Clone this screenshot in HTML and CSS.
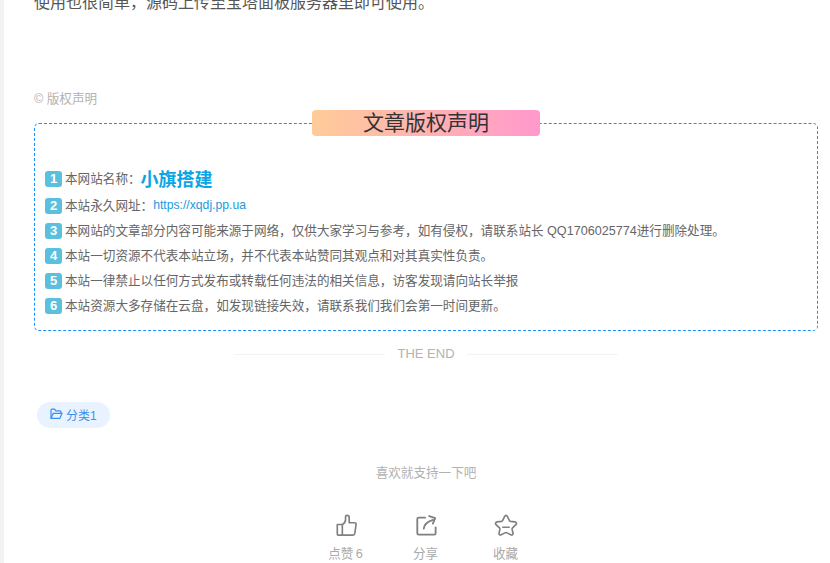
FILE: index.html
```html
<!DOCTYPE html>
<html lang="zh-CN">
<head>
    <meta charset="UTF-8">
    <meta name="viewport" content="width=device-width, initial-scale=1.0">
    <title>版权声明</title>
    <link rel="stylesheet" href="styles.css">
</head>
<body>
    <div class="page">
        <p class="intro">使用也很简单，源码上传至宝塔面板服务器里即可使用。</p>
        <div class="copy-label">© 版权声明</div>
        <div class="copy-box">
            <div class="copy-title">文章版权声明</div>
            <ul class="copy-list">
                <li class="first"><span class="num">1</span>本网站名称：<strong class="site-name">小旗搭建</strong></li>
                <li><span class="num">2</span>本站永久网址：<a href="#">https://xqdj.pp.ua</a></li>
                <li><span class="num">3</span>本网站的文章部分内容可能来源于网络，仅供大家学习与参考，如有侵权，请联系站长 QQ1706025774进行删除处理。</li>
                <li><span class="num">4</span>本站一切资源不代表本站立场，并不代表本站赞同其观点和对其真实性负责。</li>
                <li><span class="num">5</span>本站一律禁止以任何方式发布或转载任何违法的相关信息，访客发现请向站长举报</li>
                <li><span class="num">6</span>本站资源大多存储在云盘，如发现链接失效，请联系我们我们会第一时间更新。</li>
            </ul>
        </div>
        <div class="the-end"><span>THE END</span></div>
        <div class="tags">
            <a class="tag" href="#">
                <svg width="13" height="12" viewBox="0 0 13 12" fill="none" stroke="currentColor" stroke-width="1.2"><path d="M1 10V2.2C1 1.6 1.4 1.2 2 1.2H4.6L5.8 2.8H10C10.6 2.8 11 3.2 11 3.8V5"/><path d="M1 10.4H9.8L12 5.4H3.2L1 10.4Z"/></svg>
                分类1
            </a>
        </div>
        <div class="support">喜欢就支持一下吧</div>
        <div class="actions">
            <div class="action">
                <svg width="22" height="22" viewBox="0 0 24 24" fill="none" stroke="#808080" stroke-width="1.8" stroke-linejoin="round"><path d="M2.5 11.5H8V23H3.5C2.9 23 2.5 22.6 2.5 22V11.5Z"/><path d="M8 11.5C10 10.5 11.5 8.5 11.5 6V3C11.5 2 12.3 1.5 13.2 1.5C14.6 1.5 15.5 2.6 15.5 4V9.5H21.5C22.6 9.5 23.2 10.3 23 11.4L21.6 21.2C21.4 22.3 20.6 23 19.6 23H8"/></svg>
                <span>点赞&thinsp;6</span>
            </div>
            <div class="action">
                <svg width="22" height="22" viewBox="0 0 24 24" fill="none" stroke="#808080" stroke-width="2" stroke-linecap="round" stroke-linejoin="round"><path d="M11 4H4C3 4 2.5 4.6 2.5 5.5V21C2.5 22 3 22.5 4 22.5H21C22 22.5 22.5 22 22.5 21V14.5"/><path d="M9.5 16C10 12 13 8.5 19.5 6.5"/><path d="M15.5 2.2L22 4.5L19.5 10.5"/></svg>
                <span>分享</span>
            </div>
            <div class="action">
                <svg width="24" height="22" viewBox="0 0 26 24" fill="none" stroke="#808080" stroke-width="1.8" stroke-linejoin="round" stroke-linecap="round"><path d="M13 1.5C13.8 1.5 14.2 2 14.6 2.8L16.6 7C16.9 7.6 17.4 7.9 18 8L22.6 8.6C24.4 8.9 25 10.4 23.8 11.6L20.2 15.2C19.8 15.6 19.6 16.2 19.7 16.8L20.6 21C20.9 22.6 19.6 23.4 18.2 22.6L14.2 20.6C13.4 20.2 12.6 20.2 11.8 20.6L7.8 22.6C6.4 23.4 5.1 22.6 5.4 21L6.3 16.8C6.4 16.2 6.2 15.6 5.8 15.2L2.2 11.6C1 10.4 1.6 8.9 3.4 8.6L8 8C8.6 7.9 9.1 7.6 9.4 7L11.4 2.8C11.8 2 12.2 1.5 13 1.5Z"/><path d="M9.5 14.5H16.5"/></svg>
                <span>收藏</span>
            </div>
        </div>
    </div>
</body>
</html>
```

FILE: styles.css
```css
html, body {
    margin: 0;
    padding: 0;
    height: 563px;
    overflow: hidden;
}
body {
    font-family: "Liberation Sans", "Noto Sans CJK SC", sans-serif;
    background-color: #f1f2f4;
    color: #666;
}
.page {
    margin-left: 4px;
    height: 563px;
    padding: 0 12px 0 30px;
    background: #fff;
    box-sizing: border-box;
    overflow: hidden;
}
.intro {
    font-size: 16px;
    line-height: 24px;
    color: #555;
    margin: -9px 0 0;
}
.copy-label {
    font-size: 12.6px;
    line-height: 18px;
    color: #b2b2b2;
    margin-top: 75px;
}
.copy-box {
    display: flex;
    flex-direction: column;
    margin-top: 15px;
    height: 208px;
    box-sizing: border-box;
    border: 1px dashed #1890ff;
    border-radius: 5px;
}
.copy-title {
    align-self: center;
    width: 228px;
    height: 26px;
    margin-top: -14px;
    font-size: 21px;
    line-height: 25px;
    text-align: center;
    color: #333;
    background: linear-gradient(to right, #fc9, #f9c);
    border-radius: 4px;
}
.copy-list {
    list-style: none;
    margin: 27px 0 0;
    padding: 0 10px;
    font-size: 12.6px;
}
.copy-list li {
    display: flex;
    align-items: center;
    height: 25px;
}
.copy-list li.first {
    height: 29px;
}
.num {
    width: 17px;
    height: 16px;
    margin-top: 2px;
    margin-right: 3px;
    font-size: 13px;
    font-weight: bold;
    line-height: 16px;
    text-align: center;
    color: #fff;
    background: #5bc0de;
    border-radius: 3px;
}
.site-name {
    font-size: 18px;
    color: #0aa5e2;
}
.copy-list a {
    font-size: 12.2px;
    color: #1a9ade;
    text-decoration: none;
}
.the-end {
    display: flex;
    align-items: center;
    justify-content: center;
    gap: 12px;
    margin-top: 14px;
    font-size: 13px;
    line-height: 18px;
    color: #b2b2b2;
}
.the-end::before, .the-end::after {
    content: "";
    width: 151px;
    height: 1px;
    background: #f3f3f3;
}
.tags {
    margin-top: 39px;
    padding-left: 3px;
}
.tag {
    display: inline-flex;
    align-items: center;
    gap: 3px;
    height: 24px;
    padding: 0 13px 2px 13px;
    font-size: 12px;
    color: #3b8ff0;
    background: #e8f3ff;
    border-radius: 13px;
    text-decoration: none;
}
.support {
    margin-top: 36px;
    font-size: 12.6px;
    line-height: 18px;
    text-align: center;
    color: #b2b2b2;
}
.actions {
    display: flex;
    justify-content: center;
    gap: 40px;
    margin-top: 31px;
    padding-right: 1px;
}
.action {
    display: flex;
    flex-direction: column;
    align-items: center;
    gap: 7px;
    width: 40px;
    font-size: 12.6px;
    color: #aaa;
}
.action svg {
    margin-top: 1px;
}
```
